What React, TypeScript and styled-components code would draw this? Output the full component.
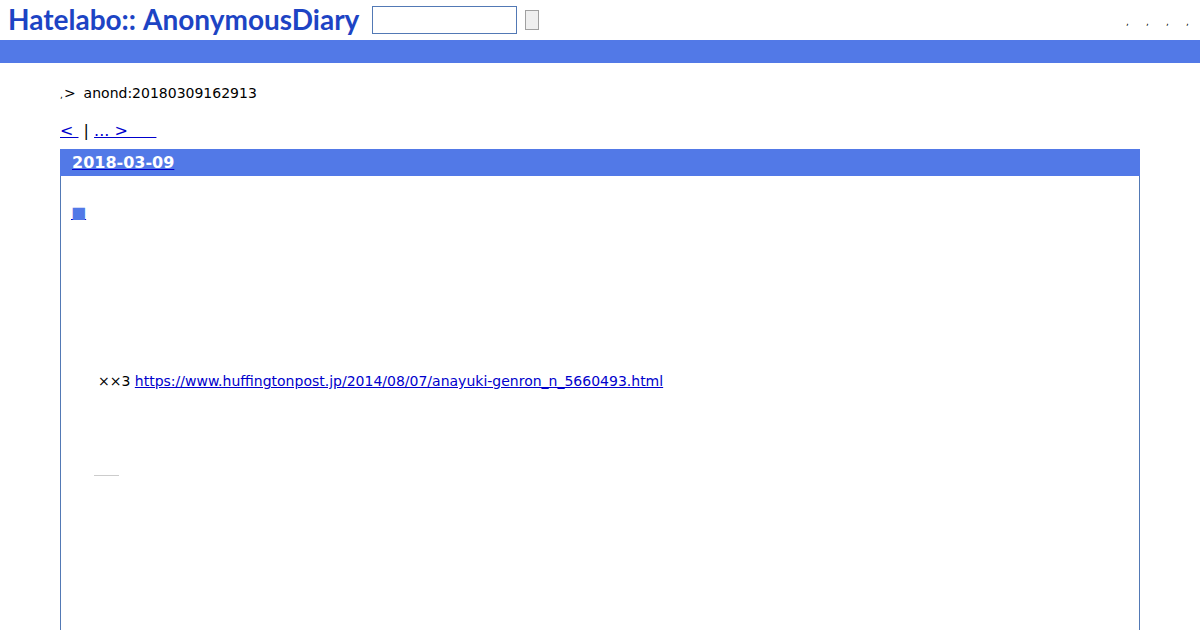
import React from "react";
import styled, { createGlobalStyle } from "styled-components";

const GlobalStyle = createGlobalStyle`
  * { box-sizing: border-box; }
  body {
    margin: 0;
    background: #fff;
    color: #000;
    font-family: "DejaVu Sans", Verdana, sans-serif;
    font-size: 14px;
    line-height: 20px;
  }
`;

const Page = styled.div`
  display: flex;
  flex-direction: column;
  min-height: 100vh;
`;

const Header = styled.header`
  display: flex;
  align-items: center;
  height: 40px;
  padding: 0 11px 0 8px;
`;

const Logo = styled.a`
  display: flex;
  gap: 7px;
  width: 364px;
  color: #1d44c4;
  font-family: Lato, "Century Gothic", sans-serif;
  font-size: 28px;
  font-weight: 700;
  line-height: 36px;
  padding-bottom: 2px;
  text-decoration: none;
`;

const SearchForm = styled.form`
  display: flex;
  align-items: center;
  gap: 8px;
`;

const SearchInput = styled.input`
  width: 145px;
  height: 28px;
  padding: 4px;
  border: 1px solid #5279b5;
  background: #fff;
  font-size: 14px;
`;

const SearchButton = styled.button`
  width: 14px;
  height: 20px;
  padding: 0;
  border: 1px solid #a0a0a0;
  background: #efefef;
`;

const Menu = styled.nav`
  display: flex;
  gap: 17px;
  margin-left: auto;
  padding-top: 4px;
`;

const MenuLink = styled.a`
  width: 3px;
  color: #000;
  font-size: 9px;
  line-height: 16px;
  text-decoration: none;
`;

const Band = styled.div`
  height: 23px;
  background: #5279e7;
`;

const Main = styled.main`
  display: flex;
  flex: 1;
  flex-direction: column;
  padding: 20px 60px 0;
`;

const Breadcrumb = styled.div`
  display: flex;
  gap: 8px;
`;

const Crumb = styled.span`
  display: flex;
  align-items: baseline;
  gap: 1px;
`;

const CrumbLink = styled.a`
  color: #000;
  font-size: 9px;
  text-decoration: none;
`;

const Pager = styled.nav`
  margin-top: 14px;
  font-size: 16px;
  line-height: 24px;
  white-space: pre;
`;

const BlueLink = styled.a`
  color: #0000cc;
  text-decoration: underline;
`;

const Day = styled.section`
  display: flex;
  flex: 1;
  flex-direction: column;
  margin-top: 6px;
  border: 1px solid #5279b5;
  border-width: 0 1px;
`;

const DayTitle = styled.h2`
  margin: 0 -1px;
  padding: 0 12px;
  background: #5279e7;
  font-size: 16px;
  line-height: 27px;
`;

const DateText = styled.span`
  color: #fff;
`;

const Entry = styled.article`
  padding: 25px 10px 0;
`;

const EntryTitle = styled.h3`
  margin: 0;
  font-size: 16px;
  font-weight: 400;
  line-height: 24px;
`;

const Mark = styled.span`
  color: #5279e7;
`;

const EntryText = styled.p`
  margin: 146px 0 0;
  padding-left: 27px;
`;

const EntryFooter = styled.footer`
  width: 25px;
  margin: 84px 0 0 23px;
  border-top: 1px solid #ccc;
`;

const menuItems = ["Guide", "Diary", "Register", "Login"];

export default function App() {
  return (
    <>
      <GlobalStyle />
      <Page>
        <Header>
          <Logo href="#">
            <span>Hatelabo::</span>
            <span>AnonymousDiary</span>
          </Logo>
          <SearchForm onSubmit={(e: React.FormEvent) => e.preventDefault()}>
            <SearchInput type="text" aria-label="Search" />
            <SearchButton type="submit" aria-label="Search" />
          </SearchForm>
          <Menu>
            {menuItems.map((item) => (
              <MenuLink key={item} href="#" aria-label={item}>,</MenuLink>
            ))}
          </Menu>
        </Header>
        <Band />
        <Main>
          <Breadcrumb>
            <Crumb><CrumbLink href="#">,</CrumbLink>&gt;</Crumb>
            <span>anond:20180309162913</span>
          </Breadcrumb>
          <Pager>
            <BlueLink href="#">{"<\u00a0"}</BlueLink>
            {" | "}
            <BlueLink href="#">{"... >\u00a0\u00a0\u00a0\u00a0\u00a0\u2009"}</BlueLink>
          </Pager>
          <Day>
            <DayTitle>
              <BlueLink href="#"><DateText>2018-03-09</DateText></BlueLink>
            </DayTitle>
            <Entry>
              <EntryTitle>
                <BlueLink href="#"><Mark>■</Mark></BlueLink>
              </EntryTitle>
              <EntryText>
                ××3 <BlueLink href="#">https://www.huffingtonpost.jp/2014/08/07/anayuki-genron_n_5660493.html</BlueLink>
              </EntryText>
              <EntryFooter />
            </Entry>
          </Day>
        </Main>
      </Page>
    </>
  );
}
